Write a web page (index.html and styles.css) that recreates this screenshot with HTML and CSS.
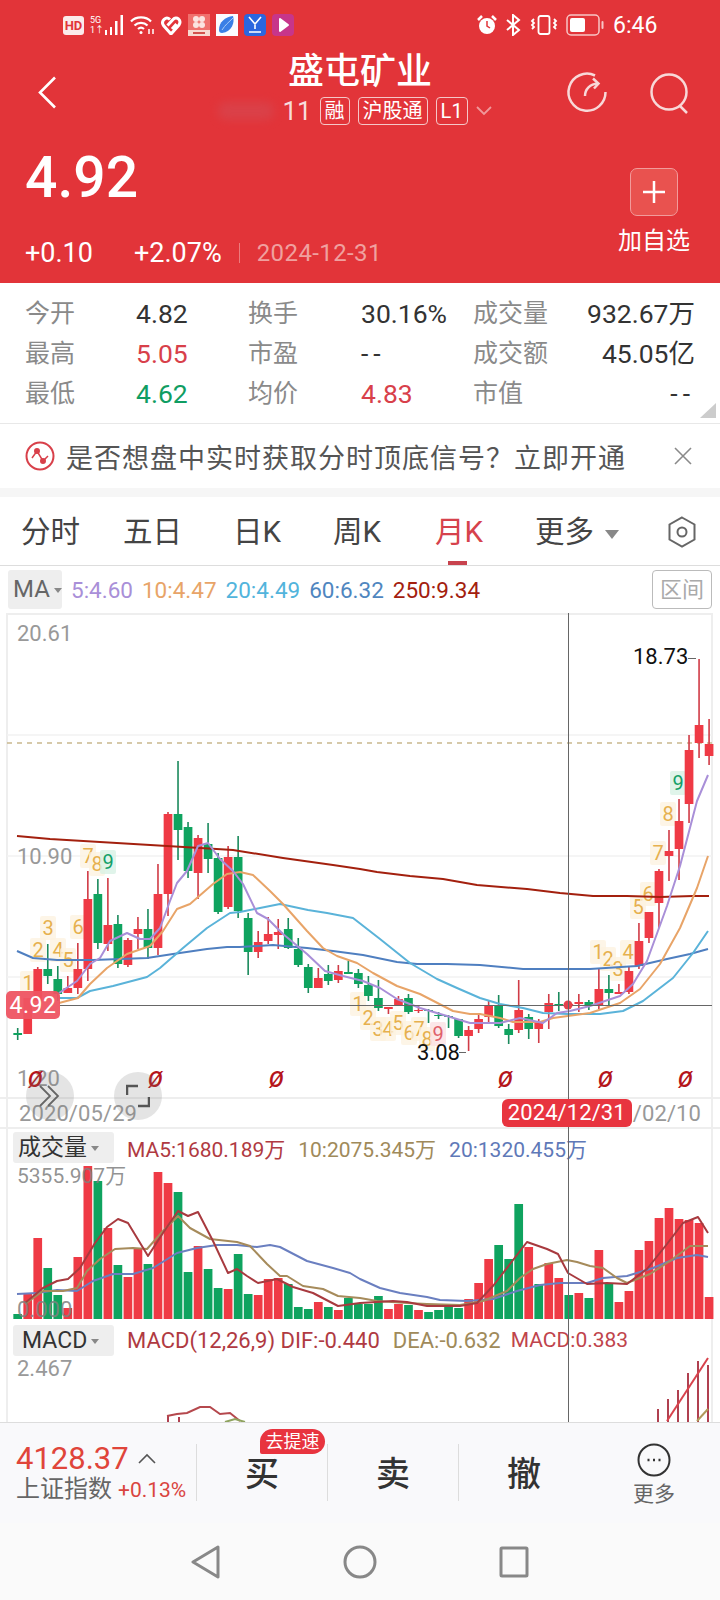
FILE: index.html
```html
<!doctype html>
<html lang="zh">
<head>
<meta charset="utf-8">
<meta name="viewport" content="width=device-width, initial-scale=1">
<title>盛屯矿业</title>
<link rel="stylesheet" href="styles.css">
</head>
<body>

<header class="quote-head">

	<div class="status">
		<div class="status-left">
			<span class="hd">HD</span>
			<span class="net"><b>5G</b><b>1↑</b></span>
			<svg width="20" height="20" viewBox="0 0 20 20"><path class="bars" d="M1 15h2v5H1zM6 12h2v8H6zM11 6h2.500v14H11zM16.500 0H19v20h-2.500z"/></svg>
			<svg width="25" height="20" viewBox="0 0 25 20" fill="none" stroke="#fff" stroke-width="2.200"><path d="M1 6.500C6 1 16 1 21 6.500M4.500 10.500c3.500-3.600 9.500-3.600 13 0M8 14c2-1.800 4-1.800 6 0"/><circle cx="11" cy="17.500" r="1.500" fill="#fff" stroke="none"/><path d="M19 14v5M23 14v5" stroke-width="1.500"/></svg>
			<svg width="21" height="20" viewBox="0 0 21 20" fill="none" stroke="#fff" stroke-width="3"><path d="M10 19L2.500 10.500C-.5 6 5 .5 9 4.500M10 19l8-9C21 5 15.500.500 12 4.500L6.500 10.500M11 14l4.500-5"/></svg>
			<svg width="22" height="22" viewBox="0 0 22 22"><rect width="22" height="22" fill="#f0706d"/><circle cx="8" cy="5" r="3" fill="#fbe3e0"/><circle cx="14" cy="5" r="3" fill="#fbe3e0"/><circle cx="8" cy="11" r="3" fill="#fbe3e0"/><circle cx="14" cy="11" r="3" fill="#fbe3e0"/><rect y="16" width="22" height="6" fill="#f8d9d0"/><rect x="5" y="18" width="12" height="2" fill="#d2524c"/></svg>
			<svg width="22" height="22" viewBox="0 0 22 22"><rect width="22" height="22" fill="#fbfbff"/><path d="M3 16C3 8 9 3 17 2c2 6-1 16-11 17-2 0-3-1-3-3z" fill="#3a7fe6"/><path d="M6 16C9 11 13 8 17 4" stroke="#a9cdf7" fill="none"/></svg>
			<svg width="22" height="22" viewBox="0 0 22 22"><rect width="22" height="22" rx="4" fill="#2b66de"/><path d="M5 3l6 7 6-7M11 11v4M5 18h12" stroke="#fff" stroke-width="1.600" fill="none"/></svg>
			<svg width="22" height="22" viewBox="0 0 22 22"><rect width="22" height="22" rx="4" fill="#c7358a"/><path d="M8 5l8 6-8 6z" fill="#fff" stroke="#fff" stroke-width="2" stroke-linejoin="round"/></svg>
		</div>
		<div class="status-right">
			<svg width="20" height="22" viewBox="0 0 20 22"><circle cx="10" cy="12" r="8" fill="#fff"/><path d="M10 7v5l3 2" stroke="#e23439" stroke-width="1.500" fill="none"/><path d="M1 6l4-4M19 6l-4-4" stroke="#fff" stroke-width="2.500"/></svg>
			<svg width="17" height="22" viewBox="0 0 17 22" fill="none" stroke="#fff" stroke-width="2"><path d="M2 6l12 10-6 5V1l6 5L2 16"/></svg>
			<svg width="28" height="20" viewBox="0 0 28 20" fill="none" stroke="#fff" stroke-width="1.800"><rect x="8.500" y="1" width="11" height="18" rx="2"/><path d="M4 4l-2 2 2 2-2 2 2 2-2 2M24 4l2 2-2 2 2 2-2 2 2 2"/></svg>
			<svg width="39" height="22" viewBox="0 0 39 22"><rect x="1" y="1" width="32" height="20" rx="4" fill="none" stroke="#f8c5c5" stroke-width="1.500"/><rect x="4" y="4" width="15" height="14" rx="2" fill="#fff"/><rect x="35.500" y="7" width="2" height="8" rx="1" fill="#f8c5c5"/></svg>
			<span class="clock">6:46</span>
		</div>
	</div>

	<div class="topnav">
		<svg class="back" width="19" height="33" viewBox="0 0 19 33" fill="none" stroke="#fff" stroke-width="2.600"><path d="M17 1.500L2 16.500l15 15"/></svg>
		<div class="name-col">
			<h1 class="stock-name">盛屯矿业</h1>
			<div class="sub">
				<span class="smudge"></span>
				<span class="code">11</span>
				<span class="tag">融</span>
				<span class="tag">沪股通</span>
				<span class="tag">L1</span>
				<svg width="16" height="10" viewBox="0 0 16 10" fill="none" stroke="#f0989a" stroke-width="1.800"><path d="M1 1l7 7 7-7"/></svg>
			</div>
		</div>
		<div class="nav-icons">
			<svg width="44" height="44" viewBox="0 0 44 44" fill="none" stroke="#f8d8d8" stroke-width="2.500"><path d="M30 5.500A18.500 18.500 0 1 0 40.500 22"/><path d="M20 26C20 19 25 14 33 13.500M28 8.500l5.500 5-4.500 5"/></svg>
			<svg width="44" height="44" viewBox="0 0 44 44" fill="none" stroke="#f8d8d8" stroke-width="2.500"><circle cx="22" cy="22" r="17.500"/><path d="M33 36l7 7"/></svg>
		</div>
	</div>

	<div class="price-row">
		<div>
			<div class="price">4.92</div>
			<div class="delta">
				<span>+0.10</span>
				<span>+2.07%</span>
				<i class="delta-sep"></i>
				<span class="delta-date">2024-12-31</span>
			</div>
		</div>
		<div class="add-fav">
			<span class="add-btn"><svg width="24" height="24" viewBox="0 0 24 24" stroke="#fff" stroke-width="2.500"><path d="M12 1v22M1 12h22"/></svg></span>
			<span class="add-label">加自选</span>
		</div>
	</div>
</header>

<section class="stats">
	<span>今开</span><b>4.82</b><span>换手</span><b>30.16%</b><span>成交量</span><b class="right">932.67万</b>
	<span>最高</span><b class="up">5.05</b><span>市盈</span><b class="dash">--</b><span>成交额</span><b class="right">45.05亿</b>
	<span>最低</span><b class="down">4.62</b><span>均价</span><b class="up">4.83</b><span>市值</span><b class="right dash">--</b>
	<i class="corner"></i>
</section>

<section class="notice">
	<svg width="30" height="30" viewBox="0 0 30 30" fill="none" stroke="#d8404a" stroke-width="2"><circle cx="15" cy="15" r="13.500"/><path d="M7 17l5-7 6 10 5-5" stroke-width="1.500"/><circle cx="12" cy="10" r="2" fill="#d8404a"/><circle cx="18" cy="20" r="2" fill="#d8404a"/></svg>
	<span class="notice-text">是否想盘中实时获取分时顶底信号？立即开通</span>
	<svg class="notice-close" width="18" height="18" viewBox="0 0 18 18" stroke="#8a8a8a" stroke-width="1.600"><path d="M1 1l16 16M17 1L1 17"/></svg>
</section>

<nav class="tabs">
	<a>分时</a>
	<a>五日</a>
	<a>日K</a>
	<a>周K</a>
	<a class="active">月K</a>
	<a>更多<i class="caret big"></i></a>
	<svg width="30" height="32" viewBox="0 0 30 32" fill="none" stroke="#666" stroke-width="2"><path d="M15 1.500l12.500 7v15L15 30.500 2.500 23.500v-15z"/><circle cx="15" cy="16" r="4.500"/></svg>
</nav>

<div class="ma-row">
	<span class="chip chip-ma">MA<i class="caret"></i></span>
	<span class="ma5">5:4.60</span>
	<span class="ma10">10:4.47</span>
	<span class="ma20">20:4.49</span>
	<span class="ma60">60:6.32</span>
	<span class="ma250">250:9.34</span>
	<span class="range-btn">区间</span>
</div>

<main class="charts">

	<svg class="pane" width="720" height="484" viewBox="0 612 720 484">
		<g id="grid" stroke="#f2f2f2" stroke-width="1.500">
			<path d="M7 734H712M7 855H712M7 976H712"/>
		</g>
		<path d="M7 742H712" stroke="#c9b88f" stroke-width="1.500" stroke-dasharray="5 5"/>
		<g id="tdMarks"></g>
		<g id="candles"></g>
		<g id="maLines" fill="none" stroke-width="2" stroke-linejoin="round"></g>
		<path d="M60 1004.500H712" stroke="#666"/>
		<circle cx="568" cy="1004" r="4.500" fill="#e5414b"/>
		<text class="axis" x="17" y="640">20.61</text>
		<text class="axis" x="17" y="863">10.90</text>
		<text class="axis" x="17" y="1085">1.20</text>
		<text class="extreme" x="633" y="663">18.73</text>
		<path d="M688 657.500h8" stroke="#666"/>
		<text class="extreme" x="417" y="1059">3.08</text>
		<path d="M459 1051.500h7" stroke="#666"/>
		<g id="slashes"></g>
		<rect x="6" y="990" width="54" height="28" rx="5" fill="#ee5462" fill-opacity=".95"/>
		<text class="last-price" x="33" y="1012">4.92</text>
	</svg>

	<div class="date-row">
		<span>2020/05/29</span>
		<span class="date-right"><em class="date-chip">2024/12/31</em>/02/10</span>
	</div>

	<div class="pane-head">
		<span class="chip chip-pane">成交量<i class="caret"></i></span>
		<span class="red">MA5:1680.189万</span>
		<span class="tan">10:2075.345万</span>
		<span class="blue">20:1320.455万</span>
	</div>

	<svg class="pane" width="720" height="155" viewBox="0 1165 720 155">
		<g id="volBars"></g>
		<g id="volLines" fill="none" stroke-width="2" stroke-linejoin="round"></g>
		<text class="axis dim vol-max" x="17" y="1182">5355.907万</text>
		<text class="axis dim" x="17" y="1316">0.000</text>
	</svg>

	<div class="pane-head macd-head">
		<span class="chip chip-pane chip-macd">MACD<i class="caret"></i></span>
		<span class="red">MACD(12,26,9) DIF:-0.440</span>
		<span class="tan">DEA:-0.632</span>
		<span class="red2">MACD:0.383</span>
	</div>

	<svg class="pane" width="720" height="63" viewBox="0 1358 720 63">
		<text class="axis" x="17" y="1375">2.467</text>
		<g id="macd" fill="none" stroke-width="2"></g>
	</svg>

	<i class="cross-v"></i>
	<span class="float-btn float-a"><svg width="24" height="22" viewBox="0 0 24 22" fill="none" stroke="#666" stroke-width="1.800"><path d="M2 1l10 10L2 21M10 1l10 10-10 10"/></svg></span>
	<span class="float-btn float-b"><svg width="24" height="24" viewBox="0 0 24 24" fill="none" stroke="#555" stroke-width="2.500"><path d="M1 11V2h11M23 13v9H12"/></svg></span>
</main>

<footer class="trade">
	<div class="index-box">
		<div class="index-val">4128.37<svg width="18" height="11" viewBox="0 0 18 11" fill="none" stroke="#555" stroke-width="1.600"><path d="M1 10l8-8 8 8"/></svg></div>
		<div class="index-name">上证指数<span>+0.13%</span></div>
	</div>
	<div class="trade-cell">买<span class="speed-badge">去提速</span></div>
	<div class="trade-cell">卖</div>
	<div class="trade-cell">撤</div>
	<div class="trade-cell more">
		<svg width="34" height="34" viewBox="0 0 34 34" fill="none" stroke="#333" stroke-width="2"><circle cx="17" cy="17" r="15.500"/><path d="M10.500 17h2M16 17h2M21.500 17h2" stroke-width="2.400"/></svg>
		<span>更多</span>
	</div>
</footer>

<div class="sys-nav">
	<svg width="30" height="34" viewBox="0 0 30 34" fill="none" stroke="#888" stroke-width="3" stroke-linejoin="round"><path d="M27 2L2 17l25 15z"/></svg>
	<svg width="34" height="34" viewBox="0 0 34 34" fill="none" stroke="#888" stroke-width="3"><circle cx="17" cy="17" r="15"/></svg>
	<svg width="30" height="32" viewBox="0 0 30 32" fill="none" stroke="#888" stroke-width="3" stroke-linejoin="round"><rect x="2" y="2" width="26" height="28" rx="1"/></svg>
</div>

<script src="chart.js"></script>
</body>
</html>
```

FILE: styles.css
```css
* { box-sizing: border-box; }
body { background: #fff; color: #333; font-family: Roboto, "Noto Sans CJK SC", sans-serif; margin: 0; overflow: hidden; width: 720px; }
svg { display: block; flex: none; }
i, em { font-style: normal; }
b { font-weight: 400; }

.quote-head { background: #e23439; color: #fff; height: 283px; }

.status { align-items: center; display: flex; height: 48px; justify-content: space-between; padding: 2px 64px 0 63px; }
.status-left, .status-right { align-items: center; display: flex; gap: 6px; }
.status-right { gap: 8px; }
.hd { background: #fbeaea; border-radius: 3px; color: #e23439; font-size: 13px; font-weight: 700; height: 19px; line-height: 19px; text-align: center; width: 21px; }
.net { display: flex; flex-direction: column; font-size: 9px; line-height: 10px; margin-right: -5px; width: 13px; }
.bars { fill: #fff; }
.clock { font-size: 23px; white-space: nowrap; width: 43px; }

.topnav { align-items: center; display: grid; grid-template-columns: 1fr auto 1fr; height: 88px; }
.back { margin-left: 38px; }
.name-col { align-self: start; padding-top: 1px; }
.stock-name { font-size: 36px; font-weight: 500; line-height: 46px; margin: 0; text-align: center; }
.sub { align-items: center; display: flex; gap: 8px; height: 30px; justify-content: center; margin-top: 1px; padding-right: 10px; position: relative; }
.smudge { background: #d7464f; border-radius: 8px; filter: blur(5px); height: 18px; opacity: .7; width: 56px; }
.code { color: #f7dcdc; font-size: 26px; }
.tag { border: 1px solid #f5c7c8; border-radius: 4px; font-size: 20px; height: 28px; line-height: 26px; padding: 0 4px; }
.nav-icons { display: flex; gap: 38px; justify-content: flex-end; padding-right: 29px; }

.price-row { display: flex; justify-content: space-between; padding: 13px 30px 0 25px; }
.price { font-size: 57px; font-weight: 500; line-height: 58px; }
.delta { align-items: center; display: flex; font-size: 27px; gap: 41px; height: 30px; margin-top: 31px; }
.delta-sep { background: #ec7b7d; height: 20px; margin: 0 -24px; width: 1px; }
.delta-date { color: #f0a09f; font-size: 24px; letter-spacing: .4px; }
.add-fav { align-items: center; display: flex; flex-direction: column; padding-top: 19px; width: 72px; }
.add-btn { align-items: center; background: #e9524f; border: 1px solid #f29b9b; border-radius: 7px; display: flex; height: 48px; justify-content: center; width: 48px; }
.add-label { font-size: 24px; line-height: 30px; margin-top: 10px; }

.stats { border-bottom: 1px solid #e8e8e8; display: grid; font-size: 25px; grid-auto-rows: 40px; grid-template-columns: 111px 112px 113px 112px 111px 111px; height: 141px; line-height: 40px; padding: 11px 0 0 25px; position: relative; }
.stats span { color: #8a8a8a; }
.stats b { color: #333; font-size: 26.500px; }
.stats .right { text-align: right; white-space: nowrap; }
.stats .up { color: #d8404a; }
.stats .down { color: #0f9d62; }
.stats .dash { letter-spacing: 5px; }
.corner { border-bottom: 15px solid #ccc; border-left: 16px solid transparent; bottom: 5px; position: absolute; right: 4px; }

.notice { align-items: center; border-bottom: 9px solid #f6f6f6; display: flex; height: 73px; padding: 0 28px 0 25px; }
.notice-text { color: #555; font-size: 27px; letter-spacing: 1px; margin-left: 11px; white-space: nowrap; }
.notice-close { margin-left: auto; }

.tabs { border-bottom: 1px solid #ddd; color: #444; display: grid; font-size: 29.500px; grid-template-columns: 102px 110px 100px 102px 100px 132px auto; height: 69px; padding: 15px 0 0 21px; }
.tabs a { line-height: 40px; white-space: nowrap; }
.tabs svg { margin-top: 4px; }
.tabs .active { color: #d6424c; position: relative; }
.tabs .active::after { background: #c8434e; bottom: 0; content: ""; height: 4px; left: 13px; position: absolute; width: 19px; }
.caret { border-left: 4px solid transparent; border-right: 4px solid transparent; border-top: 5px solid #888; display: inline-block; margin-left: 4px; vertical-align: middle; }
.caret.big { border-left-width: 7px; border-right-width: 7px; border-top-width: 9px; margin-left: 11px; }

.ma-row { align-items: center; display: flex; font-size: 22.500px; gap: 9px; height: 47px; padding-left: 8px; }
.chip { background: #eee; border-radius: 3px; color: #333; }
.chip-ma { color: #666; font-size: 24px; height: 39px; line-height: 39px; margin-right: 0; padding-left: 5px; width: 54px; }
.ma5 { color: #a98fd8; }
.ma10 { color: #e8a468; }
.ma20 { color: #52b4dc; }
.ma60 { color: #4f86bf; }
.ma250 { color: #a3200e; }
.range-btn { border: 1px solid #bbb; border-radius: 4px; color: #aaa; font-size: 22px; height: 39px; line-height: 37px; margin-left: auto; margin-right: 8px; text-align: center; width: 60px; }

.charts { background: linear-gradient(#eee, #eee) 6px 0 / 2px 100% no-repeat, linear-gradient(#eee, #eee) 711px 0 / 2px 100% no-repeat, linear-gradient(#eee, #eee) 6px 0 / 707px 2px no-repeat; height: 809px; position: relative; }
.pane { overflow: visible; }
.axis { fill: #999; font-size: 22px; }
.axis.dim { fill: #808080; fill-opacity: .85; }
.vol-max { font-size: 21px; }
.extreme { fill: #111; font-size: 22px; }
.last-price { fill: #fff; font-size: 23px; letter-spacing: .6px; text-anchor: middle; }
.td-num { font-size: 20px; text-anchor: middle; }
.slash { fill: #b5141a; font-size: 22px; font-style: italic; font-weight: 500; text-anchor: middle; }

.date-row { align-items: center; border-bottom: 2px solid #eee; border-top: 2px solid #eee; color: #999; display: flex; font-size: 22px; height: 32px; justify-content: space-between; letter-spacing: .1px; padding: 0 19px; }
.date-right { align-items: center; display: flex; position: relative; z-index: 2; }
.date-chip { background: #e8343f; border-radius: 6px; color: #fff; height: 28px; line-height: 28px; margin-right: 1px; text-align: center; width: 130px; }

.pane-head { align-items: center; display: flex; font-size: 21px; gap: 13px; height: 37px; padding-left: 13px; white-space: nowrap; }
.macd-head { font-size: 22px; height: 38px; }
.chip-pane { font-size: 23px; height: 31px; line-height: 31px; padding-left: 5px; width: 101px; }
.chip-macd { padding-left: 9px; }
.red { color: #b03a42; }
.red2 { color: #c0444c; font-size: 21px; margin-left: -3px; }
.tan { color: #a08a5a; }
.blue { color: #5f79b8; }

.cross-v { background: #666; bottom: 0; left: 568px; position: absolute; top: 0; width: 1px; }
.float-btn { align-items: center; background: rgba(120, 120, 120, .2); border-radius: 50%; display: flex; height: 48px; justify-content: center; position: absolute; top: 459px; width: 48px; }
.float-a { left: 26px; }
.float-b { left: 114px; }

.trade { background: #f9f9fb; border-top: 1px solid #ddd; display: flex; height: 101px; position: relative; }
.index-box { padding: 19px 0 0 16px; width: 196px; }
.index-val { align-items: center; color: #e0453a; display: flex; font-size: 31px; gap: 9px; height: 32px; }
.index-name { color: #666; font-size: 24px; line-height: 30px; white-space: nowrap; }
.index-name span { color: #d9453f; font-size: 21px; margin-left: 6px; }
.trade-cell { border-left: 1px solid #ddd; color: #333; font-size: 34px; font-weight: 500; height: 57px; line-height: 60px; margin-top: 21px; position: relative; text-align: center; width: 131px; }
.speed-badge { background: #e8343f; border-radius: 13px 13px 13px 2px; color: #fff; font-size: 18px; font-weight: 400; height: 25px; left: 63px; line-height: 25px; position: absolute; top: -15px; width: 65px; }
.more { align-items: center; border-left: 0; display: flex; flex-direction: column; font-weight: 400; height: 60px; margin-top: 18px; padding-top: 2px; width: 130px; }
.more span { color: #666; font-size: 21px; line-height: 28px; margin-top: 3px; }

.sys-nav { align-items: center; background: #fafafa; display: flex; gap: 122px; height: 78px; padding-left: 191px; }
```

FILE: chart.js
```js
// month candles: body top, body bottom, high, low, colour (screen y)
const candles = [
	[1032,1034,1027,1039,'g'],[997,1033,997,1033,'r'],[968,1000,966,1000,'r'],[968,975,943,983,'g'],[978,993,965,1000,'g'],
	[987,992,975,992,'r'],[968,987,942,993,'r'],[898,968,870,980,'r'],[893,942,878,948,'g'],[924,943,877,950,'r'],
	[923,963,914,967,'g'],[939,964,937,966,'r'],[928,933,916,948,'r'],[928,947,908,958,'g'],[893,947,863,954,'r'],
	[813,893,811,915,'r'],[813,829,760,859,'g'],[826,870,821,877,'g'],[837,872,834,898,'r'],[843,858,822,872,'g'],
	[857,911,852,913,'g'],[856,906,845,908,'r'],[856,910,835,917,'g'],[917,951,912,974,'g'],[941,951,930,957,'r'],
	[933,940,916,943,'r'],[931,934,918,948,'r'],[928,947,917,948,'g'],[948,964,937,966,'g'],[966,987,963,992,'g'],
	[977,987,967,987,'r'],[973,980,964,984,'g'],[970,979,964,982,'r'],[971,973,960,973,'g'],[972,983,968,987,'g'],
	[984,995,975,1000,'g'],[997,1007,979,1010,'g'],[1006,1008,1006,1013,'r'],[998,1004,995,1004,'r'],[997,1011,993,1013,'g'],
	[1009,1010,1004,1012,'r'],[1009,1010,1008,1022,'g'],[1014,1015,1011,1018,'g'],[1015,1016,1014,1027,'g'],[1018,1035,1018,1037,'g'],
	[1029,1035,1025,1050,'r'],[1018,1028,1012,1032,'r'],[1004,1016,1000,1023,'r'],[1005,1025,994,1027,'g'],[1028,1034,1023,1043,'g'],
	[1009,1029,979,1032,'r'],[1016,1028,1013,1038,'g'],[1020,1028,1018,1042,'r'],[1002,1011,993,1028,'r'],[1003,1004,991,1010,'g'],
	[1003,1005,1003,1005,'r'],[1001,1003,993,1011,'r'],[1001,1005,999,1009,'g'],[988,1005,968,1008,'r'],[988,992,974,1004,'g'],
	[991,993,983,993,'r'],[970,991,966,993,'r'],[940,965,922,968,'r'],[911,937,911,942,'r'],[870,902,868,927,'r'],
	[850,855,829,880,'r'],[820,848,798,879,'r'],[749,803,734,822,'r'],[724,742,658,757,'r'],[743,755,718,764,'r']
];

const maLines = {
	'#a3200e': '17,835 50,838 100,841 167,845 233,849 283,857 333,864 360,868 377,871 410,875 443,878 477,884 527,888 560,892 593,895 627,895 660,896 693,895 709,895',
	'#4f7fc0': '17,950 33,957 57,959 93,959 120,958 147,957 173,953 207,948 227,946 240,946 273,944 307,947 333,950 363,954 397,961 417,963 447,963 480,964 523,968 567,968 590,968 637,965 667,958 690,953 708,948',
	'#5ab3d9': '59,997 77,997 90,990 113,985 147,976 160,967 183,947 207,927 230,912 240,911 260,907 280,903 308,909 327,912 353,917 380,938 410,962 437,978 457,987 480,997 500,1003 523,1007 543,1012 568,1013 600,1013 623,1010 643,1000 673,977 693,952 708,930',
	'#e8a468': '59,1002 78,997 90,983 107,967 127,953 150,945 163,930 177,908 190,903 213,883 227,873 240,871 253,874 270,890 283,903 307,930 323,947 337,955 357,962 373,972 397,985 420,993 453,1010 470,1013 480,1013 500,1017 513,1021 540,1021 553,1017 590,1012 620,1002 640,988 660,963 680,927 697,887 708,855',
	'#a98fd8': '59,992 77,980 90,963 100,957 110,940 127,932 140,938 150,938 160,927 170,900 177,882 187,870 198,845 208,842 220,858 233,870 243,883 257,912 268,918 283,933 307,953 325,970 343,975 363,980 380,987 397,998 420,1007 447,1015 470,1022 500,1022 520,1017 543,1022 557,1012 570,1010 590,1005 620,995 633,983 647,960 667,905 680,865 697,800 708,774'
};

const volLines = {
	'#6a7fc0': '17,1293 37,1292 57,1289 77,1290 93,1280 113,1273 133,1273 153,1267 177,1252 197,1247 217,1244 237,1244 257,1246 270,1244 280,1246 307,1260 333,1267 350,1272 360,1278 380,1287 400,1292 427,1296 440,1299 467,1300 493,1298 517,1290 540,1284 560,1282 587,1282 603,1277 627,1275 653,1267 677,1257 697,1254 708,1256',
	'#a68b5b': '25,1303 43,1290 63,1290 77,1287 87,1270 100,1258 115,1248 133,1247 147,1248 163,1230 178,1215 190,1227 210,1238 237,1241 250,1245 267,1263 280,1275 287,1275 303,1285 323,1288 338,1295 360,1297 377,1300 407,1302 427,1303 460,1304 483,1300 507,1290 520,1277 533,1268 547,1263 567,1259 577,1261 590,1265 603,1267 617,1277 627,1282 650,1273 670,1260 690,1245 708,1245',
	'#a83a3f': '25,1302 43,1287 57,1280 68,1278 80,1267 95,1242 107,1226 118,1218 128,1222 148,1255 163,1232 178,1210 188,1215 198,1211 213,1240 228,1272 237,1268 247,1275 258,1282 277,1278 293,1286 313,1292 338,1305 360,1302 393,1300 407,1301 427,1305 460,1305 477,1302 493,1285 510,1263 527,1241 547,1248 558,1253 568,1272 587,1283 607,1282 627,1283 647,1268 667,1243 683,1222 698,1216 708,1232'
};

// volume bar tops and colours, one per candle
const volTops = [1313,1293,1237,1267,1294,1307,1256,1165,1180,1227,1264,1276,1248,1263,1171,1182,1191,1271,1245,1268,1287,1288,1253,1293,1294,1278,1277,1283,1306,1308,1301,1306,1309,1297,1303,1303,1295,1308,1303,1304,1309,1311,1309,1306,1307,1298,1282,1258,1244,1258,1203,1246,1283,1262,1277,1294,1292,1297,1249,1282,1301,1290,1249,1240,1217,1207,1218,1219,1222,1296];
const volColors = 'grrggrrrgrgrrgrrggrggrggrrrgggrgrggggrrgrggggrrrgggrgrrgrgrgrrrrrrrrrr';

// the 1-9 counters above and below the candles: text, x, y, kind
const tdMarks = [
	['1',28,982],['2',38,949],['3',48,927],['4',58,949],['5',68,959],['6',78,926],['7',88,855],['8',97,863],['9',108,861,'g'],
	['1',358,1003],['2',368,1017],['3',378,1028],['4',388,1028],['5',398,1022],['6',409,1032],['7',419,1028],['8',427,1038],['9',438,1033,'p'],
	['1',598,951],['2',608,958],['3',618,968],['4',628,951],['5',638,906],['6',648,893],['7',658,852],['8',668,813],['9',678,782,'g']
];

const slashX = [35,155,276,505,605,685];

const colors = { r: '#ef3a45', g: '#0fa35f' };
const wickColors = { r: '#d03b46', g: '#1b8a5d' };
const tdStyle = {
	o: [ '#fcf1df', '#e6b04e' ],
	g: [ '#d6f0e3', '#14a068' ],
	p: [ '#fbdfe2', '#e0606a' ]
};


function add( parent, tag, attrs, text ) {

	const el = document.createElementNS( 'http://www.w3.org/2000/svg', tag );

	for ( const key in attrs ) { el.setAttribute( key, attrs[ key ] ); }

	if ( text ) { el.textContent = text; }

	parent.appendChild( el );

	return el;

}

function centerX( i ) { return 17.7 + 10.02 * i; }

function drawLines( parent, lines ) {

	for ( const color in lines ) { add( parent, 'polyline', { points: lines[ color ], stroke: color } ); }

}


tdMarks.forEach( function( mark ) {

	const style = tdStyle[ mark[ 3 ] || 'o' ];

	add( document.getElementById( 'tdMarks' ), 'rect', { x: mark[ 1 ] - 8, y: mark[ 2 ] - 12, width: 16, height: 24, rx: 2, fill: style[ 0 ], 'fill-opacity': .75 } );
	add( document.getElementById( 'tdMarks' ), 'text', { x: mark[ 1 ], y: mark[ 2 ] + 7, fill: style[ 1 ], class: 'td-num' }, mark[ 0 ] );

} );

candles.forEach( function( c, i ) {

	const x = centerX( i );
	const group = document.getElementById( 'candles' );

	add( group, 'rect', { x: x - .8, y: c[ 2 ], width: 1.6, height: c[ 3 ] - c[ 2 ], fill: wickColors[ c[ 4 ] ] } );
	add( group, 'rect', { x: x - 4.35, y: c[ 0 ], width: 8.7, height: c[ 1 ] - c[ 0 ], fill: colors[ c[ 4 ] ] } );

} );

drawLines( document.getElementById( 'maLines' ), maLines );

slashX.forEach( function( x ) {

	add( document.getElementById( 'slashes' ), 'text', { x: x, y: 1086, class: 'slash' }, 'Ø' );

} );

volTops.forEach( function( top, i ) {

	add( document.getElementById( 'volBars' ), 'rect', { x: centerX( i ) - 4.35, y: top, width: 8.7, height: 1318 - top, fill: colors[ volColors[ i ] ] } );

} );

drawLines( document.getElementById( 'volLines' ), volLines );

// only the top of the macd pane is on screen
const macd = document.getElementById( 'macd' );

[ [658,1408],[668,1398],[678,1389],[688,1372],[698,1360],[708,1364],[168,1414],[179,1416] ].forEach( function( bar ) {

	add( macd, 'path', { d: 'M' + bar[ 0 ] + ' ' + bar[ 1 ] + 'V1421', stroke: '#b04050' } );

} );

add( macd, 'polyline', { points: '167,1415 177,1413 187,1412 200,1406 210,1406 220,1413 230,1412 240,1420', stroke: '#b5484d' } );
add( macd, 'polyline', { points: '225,1421 235,1418 245,1421', stroke: '#8fa35f' } );
add( macd, 'polyline', { points: '667,1420 708,1357', stroke: '#d8424c' } );
add( macd, 'polyline', { points: '697,1420 708,1408', stroke: '#b09a5a' } );
```
